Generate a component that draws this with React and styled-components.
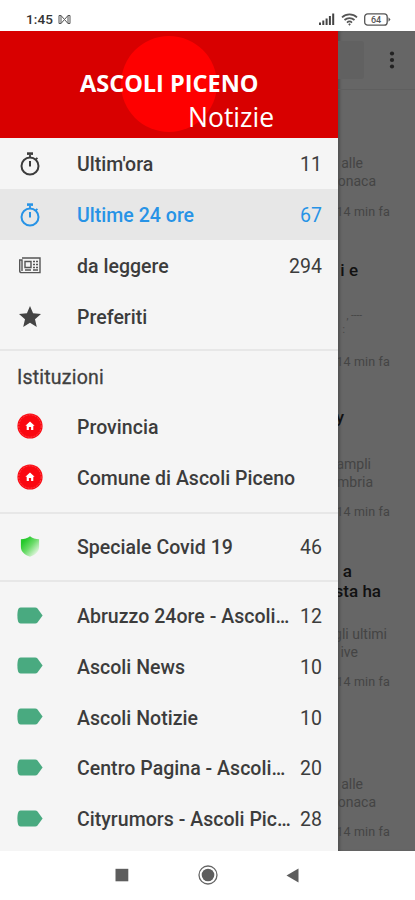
import React from "react";
import styled, { createGlobalStyle } from "styled-components";

const Global = createGlobalStyle`
  *, *::before, *::after { box-sizing: border-box; }
  body { margin: 0; background: #fff; font-family: Roboto, sans-serif; }
`;

const Phone = styled.div`
  width: 415px;
  height: 900px;
  display: flex;
  flex-direction: column;
  overflow: hidden;
  background: #fff;
`;

const StatusBar = styled.header`
  height: 31px;
  flex: none;
  display: flex;
  align-items: center;
  padding: 7px 24px 0 26px;
  color: #333;
`;

const Clock = styled.span`
  width: 32px;
  font-size: 13.5px;
  font-weight: 500;
  line-height: 16px;
  letter-spacing: 0.1px;
  white-space: nowrap;
`;

const StatusIcons = styled.div`
  display: flex;
  align-items: center;
  gap: 6px;
  margin-left: auto;
`;

const Icon = styled.svg`
  display: block;
  flex: none;
`;

const Main = styled.main`
  height: 819.5px;
  flex: none;
  display: flex;
`;

const Drawer = styled.nav`
  width: 338px;
  flex: none;
  background: #f5f5f5;
`;

const Banner = styled.div`
  position: relative;
  height: 107px;
  background: #d80000;
  color: #fff;
  padding-top: 39px;
  font-family: "Open Sans", sans-serif;
`;

const Disc = styled.div`
  position: absolute;
  left: 121px;
  top: 5px;
  width: 96px;
  height: 96px;
  border-radius: 50%;
  background: #fe0000;
`;

const BannerTitle = styled.div`
  position: relative;
  padding-left: 80px;
  font-size: 23.5px;
  font-weight: 700;
  line-height: 26px;
  white-space: nowrap;
`;

const BannerSubtitle = styled.div`
  position: relative;
  padding: 5px 0 0 188px;
  font-size: 26.5px;
  line-height: 32px;
  white-space: nowrap;
`;

const Group = styled.section`
  padding: ${(p) => p.$pad || "9px 0 8.5px"};
  border-top: ${(p) => (p.$first ? "0" : "2px solid #e7e7e7")};
`;

const GroupTitle = styled.h2`
  margin: 0;
  padding-left: 17px;
  height: 41.5px;
  line-height: 36px;
  font-size: 19.5px;
  font-weight: 400;
  letter-spacing: 0.2px;
  color: #3f3f3f;
  -webkit-text-stroke: 0.3px;
`;

const Row = styled.div`
  height: 50.75px;
  display: grid;
  grid-template-columns: 60px 1fr auto;
  align-items: center;
  padding: 0 16px 0 17px;
  color: ${(p) => (p.$active ? "#2793e6" : "#3c3c3c")};
  background: ${(p) => (p.$active ? "#e7e7e7" : "transparent")};
`;

const IconCell = styled.div`
  width: 26px;
  display: flex;
  justify-content: center;
  padding-bottom: ${(p) => (p.$raised ? "1px" : "0")};
`;

const Label = styled.span`
  padding-top: 3px;
  font-size: 19.5px;
  font-weight: 500;
  line-height: 26px;
  letter-spacing: 0.03px;
  white-space: nowrap;
`;

const Count = styled.span`
  padding-top: 3px;
  font-size: 19.5px;
  line-height: 26px;
`;

const Feed = styled.aside`
  width: 77px;
  flex: none;
  overflow: hidden;
  background: #666;
  box-shadow: inset 3px 0 3px -1px #505050;
`;

const Toolbar = styled.div`
  height: 59px;
  display: flex;
  align-items: center;
  justify-content: space-between;
  padding-right: 18px;
  border-bottom: 1px solid #5f5f5f;
`;

const SearchEnd = styled.div`
  width: 26px;
  height: 38px;
  border-radius: 0 3px 3px 0;
  background: #616161;
`;

const FeedLine = styled.div`
  height: 18px;
  margin-top: ${(p) => p.$gap}px;
  padding-right: ${(p) => p.$end}px;
  display: flex;
  justify-content: flex-end;
  white-space: nowrap;
  line-height: 18px;
  font-size: ${(p) => ({ title: 17, time: 12.5, body: 14, faint: 10 })[p.$kind]}px;
  font-weight: ${(p) => (p.$kind === "title" ? 500 : 400)};
  letter-spacing: ${(p) => (p.$kind === "time" ? 0.15 : 0)}px;
  color: ${(p) => (p.$kind === "title" ? "#111" : "#444")};
`;

const NavBar = styled.footer`
  flex: 1;
  display: flex;
  align-items: center;
  padding-left: 115px;
`;

const NavSlot = styled.div`
  width: ${(p) => p.$w}px;
`;

const Stopwatch = () => (
  <Icon width="22" height="25" viewBox="0 0 22 25" fill="none" stroke="currentColor">
    <circle cx="11" cy="15" r="8.5" strokeWidth="2" />
    <path d="M8 2.6h6" strokeWidth="2.6" />
    <path d="M11 4v3M16.6 8.6l1.8-1.8" strokeWidth="1.8" />
    <path d="M11 10v5.6" strokeWidth="2" />
  </Icon>
);

const Newspaper = () => (
  <Icon width="22" height="17" viewBox="0 0 22 17" fill="none" stroke="#555" strokeWidth="1.4">
    <path d="M3 1h18v14.6H2.6A1.9 1.9 0 0 1 .7 13.7V3H3v11" />
    <path d="M6 4.5h6v6H6zM14 4.5h2M17 4.5h2M14 7.5h2M17 7.5h2M14 10.5h2M17 10.5h2M6 13h6M14 13h5" />
  </Icon>
);

const Star = () => (
  <Icon width="22" height="21" viewBox="2 2 20 19" fill="#444">
    <path d="M12 17.27 18.18 21l-1.64-7.03L22 9.24l-7.19-.61L12 2 9.19 8.63 2 9.24l5.46 4.73L5.82 21z" />
  </Icon>
);

const House = () => (
  <Icon width="26" height="26" viewBox="0 0 26 26">
    <circle cx="13" cy="13" r="12.6" fill="#fa0710" />
    <circle cx="13" cy="13" r="11.2" fill="none" stroke="#ff6a6a" strokeWidth=".6" strokeDasharray="2 1" />
    <path d="M13 8.4 8.4 12.8h1.3v4.1h2.2v-2.8h2.2v2.8h2.2v-4.1h1.3z" fill="#fff" />
  </Icon>
);

const Shield = () => (
  <Icon width="20" height="21" viewBox="0 0 20 21">
    <defs>
      <linearGradient id="shield" x1="0" y1="0" x2="1" y2="1">
        <stop offset="0.2" stopColor="#25c92c" />
        <stop offset="0.5" stopColor="#6bdb69" />
        <stop offset="0.85" stopColor="#e0f6dd" />
      </linearGradient>
    </defs>
    <path d="M10 .3C8 2.4 4 3 .9 3.2V11c0 5 4.1 8 9.1 9.7 5-1.7 9.1-4.7 9.1-9.7V3.2C16 3 12 2.4 10 .3z" fill="url(#shield)" />
  </Icon>
);

const Tag = () => (
  <Icon width="26" height="17" viewBox="0 0 26 17">
    <path d="M3.5.5h14.7c1 0 1.7.3 2.3 1L25.6 8.5 20.5 15.5c-.6.7-1.3 1-2.3 1H3.5C1.2 16.5.4 13 .4 8.5S1.2.5 3.5.5z" fill="#49aa80" />
  </Icon>
);

const icons = { watch: Stopwatch, news: Newspaper, star: Star, house: House, shield: Shield, tag: Tag };

const Item = ({ icon, label, count, active }) => {
  const Glyph = icons[icon];
  return (
    <Row $active={active}>
      <IconCell $raised={icon === "tag" || icon === "shield" || icon === "house"}><Glyph /></IconCell>
      <Label>{label}</Label>
      {count && <Count>{count}</Count>}
    </Row>
  );
};

const sources = [
  ["Abruzzo 24ore - Ascoli…", "12"],
  ["Ascoli News", "10"],
  ["Ascoli Notizie", "10"],
  ["Centro Pagina - Ascoli…", "20"],
  ["Cityrumors - Ascoli Pic…", "28"],
];

const feed = [
  ["body", "alle", 52, 64],
  ["body", "onaca", 39, 0],
  ["time", "14 min fa", 25, 13],
  ["title", "i e", 57, 40],
  ["faint", ", ----", 53, 28],
  ["faint", ":", 70, -4],
  ["time", "14 min fa", 25, 14],
  ["title", "y", 71, 37],
  ["body", "ampli", 44, 29],
  ["body", "mbria", 42, 0],
  ["time", "14 min fa", 25, 12],
  ["title", "a", 63, 41],
  ["title", "sta ha", 34, 2],
  ["body", "gli ultimi", 28, 25],
  ["body", "ive", 57, 0],
  ["time", "14 min fa", 25, 12],
  ["body", "alle", 52, 84],
  ["body", "onaca", 39, 0],
  ["time", "14 min fa", 25, 12],
];

export default function App() {
  return (
    <Phone>
      <Global />
      <StatusBar>
        <Clock>1:45</Clock>
        <Icon width="13" height="9" viewBox="0 0 13 9" fill="none" stroke="#555">
          <path d="M1 .5v8M3 .5v8M1 .5h2l3.5 4L10 .5h2v8h-2v-8M1 8.5h2L6.5 4.5 10 8.5" />
        </Icon>
        <StatusIcons>
          <Icon width="16" height="12" viewBox="0 0 16 12" fill="#444">
            <path d="M0 9.5h2V12H0zM3.3 7.5h2V12h-2zM6.6 5.5h2V12h-2zM9.9 3h2v9h-2zM13.2.5h2V12h-2z" />
          </Icon>
          <Icon width="17" height="13" viewBox="0 0 17 13" fill="none" stroke="#555" strokeWidth="1.7">
            <path d="M1 4.3a11 11 0 0 1 15 0M3.5 7a7.4 7.4 0 0 1 10 0M6 9.6a3.6 3.6 0 0 1 5 0" />
            <path d="M8.5 10.3 7.2 11.3 8.5 12.7l1.3-1.4z" fill="#555" stroke="none" />
          </Icon>
          <Icon width="27" height="13" viewBox="0 0 27 13">
            <rect x=".7" y=".8" width="22.5" height="11.4" rx="3" fill="none" stroke="#555" strokeWidth="1.3" />
            <path d="M24.5 4.2 26.5 6.5l-2 2.3z" fill="#555" />
            <text x="12" y="9.7" textAnchor="middle" fontFamily="Roboto, sans-serif" fontSize="9" fontWeight="500" fill="#555">64</text>
          </Icon>
        </StatusIcons>
      </StatusBar>
      <Main>
        <Drawer>
          <Banner>
            <Disc />
            <BannerTitle>ASCOLI PICENO</BannerTitle>
            <BannerSubtitle>Notizie</BannerSubtitle>
          </Banner>
          <Group $first $pad="0.5px 0 7.5px">
            <Item icon="watch" label="Ultim'ora" count="11" />
            <Item icon="watch" label="Ultime 24 ore" count="67" active />
            <Item icon="news" label="da leggere" count="294" />
            <Item icon="star" label="Preferiti" />
          </Group>
          <Group>
            <GroupTitle>Istituzioni</GroupTitle>
            <Item icon="house" label="Provincia" />
            <Item icon="house" label="Comune di Ascoli Piceno" />
          </Group>
          <Group $pad="8px 0">
            <Item icon="shield" label="Speciale Covid 19" count="46" />
          </Group>
          <Group $pad="8px 0 0">
            {sources.map(([label, count]) => (
              <Item key={label} icon="tag" label={label} count={count} />
            ))}
          </Group>
        </Drawer>
        <Feed>
          <Toolbar>
            <SearchEnd />
            <Icon width="10" height="18" viewBox="0 0 10 18" fill="#222">
              <circle cx="5" cy="2.5" r="2.1" />
              <circle cx="5" cy="9" r="2.1" />
              <circle cx="5" cy="15.5" r="2.1" />
            </Icon>
          </Toolbar>
          {feed.map(([kind, text, end, gap], i) => (
            <FeedLine key={i} $kind={kind} $end={end} $gap={gap}>{text}</FeedLine>
          ))}
        </Feed>
      </Main>
      <NavBar>
        <NavSlot $w={83}>
          <Icon width="14" height="14" viewBox="0 0 14 14"><path d="M.5.8h12.8v12.5H.5z" fill="#5d5d5d" /></Icon>
        </NavSlot>
        <NavSlot $w={88}>
          <Icon width="20" height="20" viewBox="-3 0 20 20">
            <circle cx="7" cy="10" r="9" fill="none" stroke="#666" strokeWidth="1.3" />
            <circle cx="7" cy="10" r="6.3" fill="#5d5d5d" />
          </Icon>
        </NavSlot>
        <Icon width="13" height="15" viewBox="0 0 13 15"><path d="M12.5.5v14L.5 7.5z" fill="#5d5d5d" /></Icon>
      </NavBar>
    </Phone>
  );
}
